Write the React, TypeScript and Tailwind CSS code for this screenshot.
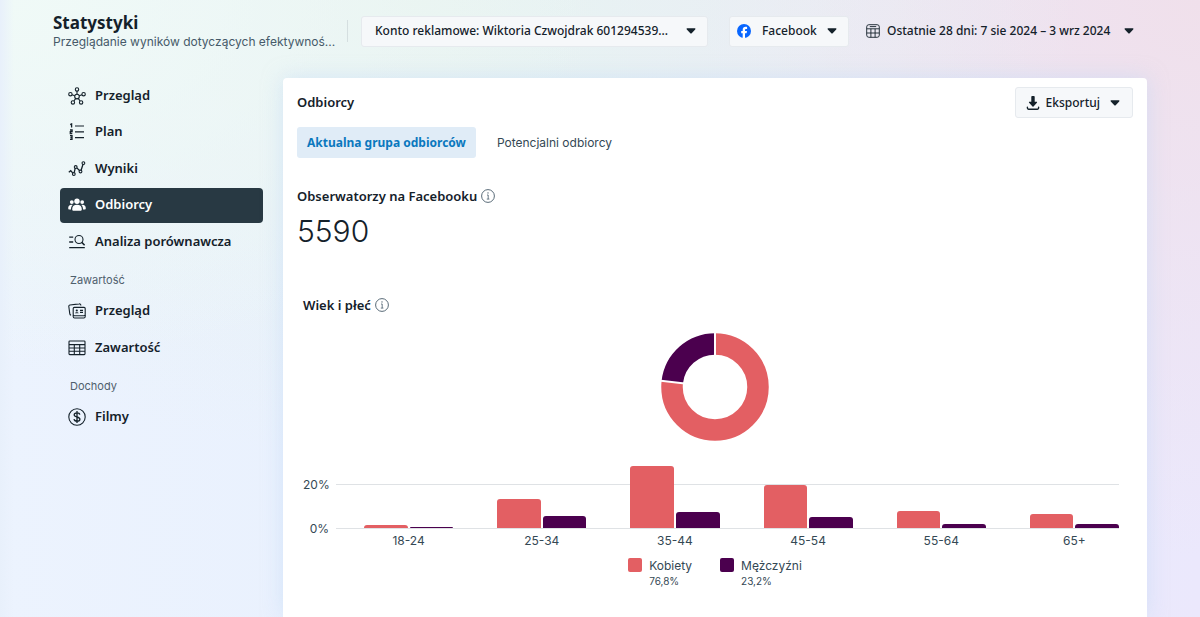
import React, { useState } from 'react';

type IconProps = { className?: string };

const iconProps = {
  viewBox: '0 0 18 18',
  fill: 'none',
  stroke: 'currentColor',
  strokeWidth: 1.1,
  'aria-hidden': true,
} as const;

const OverviewIcon: React.FC<IconProps> = ({ className }) => (
  <svg {...iconProps} className={className}>
    <circle cx="9" cy="9.6" r="2.3" />
    <circle cx="9" cy="2.4" r="1.7" />
    <circle cx="2.4" cy="7.2" r="1.7" />
    <circle cx="15.6" cy="7.2" r="1.7" />
    <circle cx="4.9" cy="15.4" r="1.7" />
    <circle cx="13.1" cy="15.4" r="1.7" />
    <path d="M9 4.1v3.2M4 7.8l2.8 1M14 7.8l-2.8 1M5.9 14l1.7-2.4M12.1 14l-1.7-2.4" />
  </svg>
);

const PlanIcon: React.FC<IconProps> = ({ className }) => (
  <svg {...iconProps} className={className}>
    <path d="M7 3h9M7 8.8h9M7 14.6h9" strokeWidth="1.2" />
    <path d="M2.2 1.6l1.4-.7v3.6M2 7h2.1v1.7H2.3v1.8h2M2 12.7h2v3.6H2M2.4 14.5H4" strokeWidth="1.3" />
  </svg>
);

const ResultsIcon: React.FC<IconProps> = ({ className }) => (
  <svg {...iconProps} className={className}>
    <path d="M.8 12.2l1.9-1.5 2 2.2M6.2 12.7l1-4.5M8.8 7.9l2.7 2.6M13.1 10.3l2-6.3" strokeWidth="1.3" />
    <circle cx="5.8" cy="14" r="1.4" />
    <circle cx="7.7" cy="7" r="1.4" />
    <circle cx="12.5" cy="11.5" r="1.4" />
    <circle cx="15.4" cy="3.1" r="1.4" />
  </svg>
);

const AudienceIcon: React.FC<IconProps> = ({ className }) => (
  <svg viewBox="0 0 18 18" fill="currentColor" className={className} aria-hidden>
    <circle cx="9" cy="5.2" r="2.7" />
    <circle cx="3.8" cy="6.1" r="1.9" />
    <circle cx="14.2" cy="6.1" r="1.9" />
    <path d="M4.2 13.2c0-2.9 1.9-4.4 4.8-4.4s4.8 1.5 4.8 4.4c0 1.2-.6 1.6-1.6 1.6H5.8c-1 0-1.6-.4-1.6-1.6z" />
    <path d="M.2 12.2c0-2 1.2-3.4 3.3-3.4.5 0 .9.1 1.2.2-1.2 1-1.8 2.5-1.7 4.5H1.4c-.8 0-1.2-.4-1.2-1.3zM17.8 12.2c0-2-1.2-3.4-3.3-3.4-.5 0-.9.1-1.2.2 1.2 1 1.8 2.5 1.7 4.5h1.6c.8 0 1.2-.4 1.2-1.3z" />
  </svg>
);

const BenchmarkIcon: React.FC<IconProps> = ({ className }) => (
  <svg {...iconProps} className={className}>
    <path d="M1.2 4.2h4M1.2 9h4M1.2 14.6h15.6" strokeWidth="1.3" />
    <circle cx="11" cy="6.5" r="4" />
    <path d="M13.8 9.4l2.8 2.8" strokeWidth="1.5" />
  </svg>
);

const CardsIcon: React.FC<IconProps> = ({ className }) => (
  <svg {...iconProps} className={className}>
    <rect x="5.2" y="5.4" width="12" height="8.4" rx="1.2" />
    <path d="M5.2 13v1.6c0 .9.5 1.4 1.4 1.4h9.2c.9 0 1.4-.5 1.4-1.4V13" />
    <path d="M12.8 3.6V3c-.1-.8-.7-1.3-1.6-1.1L2 3c-.9.1-1.3.7-1.2 1.5l1 7.4c.1.7.5 1.1 1.3 1.2" />
    <path d="M12 8.4h3M12 10.4h3" />
    <circle cx="8.8" cy="8.5" r="1.1" fill="currentColor" stroke="none" />
    <path d="M7 11.3c.2-1.4 3.4-1.4 3.6 0z" fill="currentColor" stroke="none" />
  </svg>
);

const TableIcon: React.FC<IconProps> = ({ className }) => (
  <svg {...iconProps} className={className}>
    <rect x="1" y="2" width="16" height="13.6" rx=".8" />
    <path d="M1 5.6h16M1 9h16M1 12.3h16M6.3 5.6v10M11.7 5.6v10" />
  </svg>
);

const DollarIcon: React.FC<IconProps> = ({ className }) => (
  <svg {...iconProps} className={className}>
    <circle cx="9" cy="9" r="8.2" />
    <path
      d="M9 3v12M11.8 6.6C11.6 5.4 10.6 4.8 9 4.8c-1.7 0-2.8.8-2.8 2 0 1.3 1.2 1.8 2.8 2.2s2.900.9 2.900 2.200c0 1.200-1.200 2-2.900 2s-2.800-.8-3-2"
      strokeWidth="1.3"
    />
  </svg>
);

const CalendarIcon: React.FC<IconProps> = ({ className }) => (
  <svg {...iconProps} viewBox="0 0 14 14" strokeWidth={0.9} className={className}>
    <rect x=".7" y=".7" width="12.6" height="12.6" rx="2.2" />
    <path d="M3.8 2.6h6.4M.7 4.8h12.6M.7 9h12.6M4.9 4.8v8.5M9.1 4.8v8.5" />
  </svg>
);

const FacebookIcon: React.FC<IconProps> = ({ className }) => (
  <svg viewBox="0 0 14 14" className={className} aria-hidden>
    <circle cx="7" cy="7" r="7" fill="#0866ff" />
    <path
      fill="#fff"
      d="M5.7 14V9.2H4.2V7.1h1.5v-1c0-2.2 1-3.3 3.1-3.3.4 0 .9.1 1.3.2v1.900h-.8c-1 0-1.300.4-1.300 1.300v.9H10l-.4 2.100H8V14z"
    />
  </svg>
);

const DownloadIcon: React.FC<IconProps> = ({ className }) => (
  <svg viewBox="0 0 14 14" fill="currentColor" className={className} aria-hidden>
    <path d="M5.300.8c0-.5.300-.8.800-.8h1.800c.5 0 .8.300.8.800v5h1.800c.6 0 .8.500.4.900L7.500 10.400c-.3.300-.7.300-1 0L3.100 6.700c-.4-.4-.2-.9.400-.9h1.800z" />
    <path d="M1.400 11.200v.9c0 .7.400 1.100 1.100 1.100h9c.7 0 1.100-.4 1.100-1.100v-.9" fill="none" stroke="currentColor" strokeWidth="1.4" strokeLinecap="round" />
  </svg>
);

const InfoIcon: React.FC<IconProps> = ({ className }) => (
  <svg viewBox="0 0 14 14" fill="none" stroke="currentColor" className={className} aria-hidden>
    <circle cx="7" cy="7" r="6.4" strokeWidth=".9" />
    <path d="M6 6h1.200v4M5.800 10.100h2.600" strokeWidth=".8" />
    <circle cx="7" cy="3.9" r=".7" fill="currentColor" stroke="none" />
  </svg>
);

const Caret: React.FC<IconProps> = ({ className = '' }) => (
  <svg viewBox="0 0 10 6" fill="currentColor" className={`w-2.5 h-1.5 ${className}`} aria-hidden>
    <path d="M1.300.3h7.400c.7 0 1 .7.500 1.200L5.700 5.300c-.4.400-1 .4-1.400 0L.8 1.500C.3 1 .6.300 1.300.3z" />
  </svg>
);

const NAV = [
  {
    title: '',
    listClass: 'h-[181px]',
    items: [
      { id: 'overview', label: 'Przegląd', Icon: OverviewIcon },
      { id: 'plan', label: 'Plan', Icon: PlanIcon },
      { id: 'results', label: 'Wyniki', Icon: ResultsIcon },
      { id: 'audience', label: 'Odbiorcy', Icon: AudienceIcon },
      { id: 'benchmark', label: 'Analiza porównawcza', Icon: BenchmarkIcon },
    ],
  },
  {
    title: 'Zawartość',
    listClass: 'h-[72px]',
    items: [
      { id: 'content-overview', label: 'Przegląd', Icon: CardsIcon },
      { id: 'content', label: 'Zawartość', Icon: TableIcon },
    ],
  },
  {
    title: 'Dochody',
    listClass: '',
    items: [{ id: 'videos', label: 'Filmy', Icon: DollarIcon }],
  },
];

const AGE_GROUPS = [
  { label: '18-24', women: 1.3, men: 0.6 },
  { label: '25-34', women: 13.2, men: 5.6 },
  { label: '35-44', women: 28.4, men: 7.6 },
  { label: '45-54', women: 20, men: 5 },
  { label: '55-64', women: 7.8, men: 2 },
  { label: '65+', women: 6.4, men: 2 },
];

const CHART_MAX = 30;
const WOMEN_SHARE = 76.8;

const Donut: React.FC = () => {
  const r = 43;
  const length = 2 * Math.PI * r;
  const women = (length * WOMEN_SHARE) / 100;
  // white spokes separate the two slices
  const angle = (WOMEN_SHARE / 100) * 2 * Math.PI;
  return (
    <svg viewBox="0 0 108 108" className="w-[108px] h-[108px]" role="img" aria-label="Kobiety 76,8%, mężczyźni 23,2%">
      <g transform="rotate(-90 54 54)" fill="none" strokeWidth="21.5">
        <circle cx="54" cy="54" r={r} stroke="#e35f63" strokeDasharray={`${women} ${length}`} />
        <circle cx="54" cy="54" r={r} stroke="#4b004e" strokeDasharray={`${length - women} ${length}`} strokeDashoffset={-women} />
      </g>
      <g stroke="#fff" strokeWidth="2">
        <line x1="54" y1="54" x2="54" y2="0" />
        <line x1="54" y1="54" x2={54 + 55 * Math.sin(angle)} y2={54 - 55 * Math.cos(angle)} />
      </g>
    </svg>
  );
};

const BarChart: React.FC = () => (
  <div className="flex gap-[7px]">
    <div className="flex flex-col justify-between h-[60px] mt-[15px] w-[26px] text-right text-xs leading-4 text-[#344854]">
      <span>20%</span>
      <span>0%</span>
    </div>
    <div className="flex-1">
      <div className="relative h-[66px] mt-px">
        <div className="absolute inset-x-0 bottom-[44px] border-t border-[#dfe2e5]" />
        <div className="relative flex h-full gap-11 pl-7 border-b border-[#dfe2e5]">
          {AGE_GROUPS.map((group) => (
            <div key={group.label} className="flex flex-1 items-end gap-0.5">
              <div className="flex-1 rounded-t-[3px] bg-[#e35f63]" style={{ height: `${(group.women / CHART_MAX) * 100}%` }} />
              <div className="flex-1 rounded-t-[3px] bg-[#4b004e]" style={{ height: `${(group.men / CHART_MAX) * 100}%` }} />
            </div>
          ))}
        </div>
      </div>
      <div className="flex gap-11 pl-7 mt-1 text-xs leading-4 text-[#344854]">
        {AGE_GROUPS.map((group) => (
          <span key={group.label} className="flex-1 text-center">{group.label}</span>
        ))}
      </div>
    </div>
  </div>
);

const App: React.FC = () => {
  const [active, setActive] = useState('audience');
  const [tab, setTab] = useState('current');

  return (
    <div className="relative isolate min-h-screen flex flex-col bg-[#eaf2fd] font-['Noto_Sans',sans-serif] text-[13px] text-[#14212a]">
      <div className="absolute inset-0 -z-10 bg-[linear-gradient(90deg,#e8f0fb_0px,transparent_14px),radial-gradient(ellipse_50%_60%_at_0%_0%,#f0faf7_0%,transparent_100%),radial-gradient(ellipse_55%_75%_at_35%_0%,#e8f3f0_0%,transparent_100%),radial-gradient(ellipse_55%_90%_at_100%_0%,#f0e0eb_0%,transparent_100%),linear-gradient(90deg,#ecf3fe_0%,#e7effd_50%,#ebe8fc_100%)]" />

      <header className="flex items-center h-[78px] pb-4 pl-[53px] pr-[53px]">
        <div className="w-[276px] shrink-0 pt-0.5">
          <h1 className="text-[17px] leading-5 font-bold">Statystyki</h1>
          <p className="font-[Inter,sans-serif] text-xs leading-[18px] text-[#465a69] whitespace-nowrap">
            Przeglądanie wyników dotyczących efektywnoś...
          </p>
        </div>
        <div className="w-px h-[22px] ml-[18px] mr-[13px] bg-[#d5dfe0]" />
        <div className="relative flex-1 max-w-[347px]">
          <select aria-label="Konto reklamowe" className="appearance-none w-full h-[31px] pl-[13px] pr-7 rounded-[3px] bg-[#f6f8fa] border border-[#e6eaee] text-xs font-medium">
            <option>Konto reklamowe: Wiktoria Czwojdrak 601294539...</option>
          </select>
          <Caret className="absolute right-3 top-3 pointer-events-none" />
        </div>
        <div className="relative ml-[21px]">
          <FacebookIcon className="absolute left-2 top-2 w-3.5 h-3.5 pointer-events-none" />
          <select aria-label="Platforma" className="appearance-none w-[120px] h-[31px] pl-8 pr-6 rounded-[3px] bg-[#f6f8fa] border border-[#e6eaee] text-xs font-medium">
            <option>Facebook</option>
            <option>Instagram</option>
          </select>
          <Caret className="absolute right-3 top-3 pointer-events-none" />
        </div>
        <div className="relative ml-[17px]">
          <CalendarIcon className="absolute left-0 top-2 w-3.5 h-3.5 pointer-events-none" />
          <select aria-label="Zakres dat" className="appearance-none w-[268px] h-[31px] pl-[21px] pr-3 bg-transparent text-xs font-medium">
            <option>Ostatnie 28 dni: 7 sie 2024 – 3 wrz 2024</option>
          </select>
          <Caret className="absolute right-0 top-3 pointer-events-none" />
        </div>
      </header>

      <div className="flex flex-1 pl-[60px] pr-[53px]">
        <nav className="w-[203px] shrink-0 mr-5">
          {NAV.map(({ title, listClass, items }) => (
            <div key={title}>
              {title && <h2 className="mt-[13px] mb-[5px] pl-2.5 font-[Inter,sans-serif] text-[11px] leading-4 text-[#4f606d]">{title}</h2>}
              <ul className={`flex flex-col justify-between ${listClass}`}>
                {items.map(({ id, label, Icon }) => (
                  <li key={id}>
                    <a
                      href={`#${id}`}
                      onClick={() => setActive(id)}
                      className={`flex items-center gap-[9px] h-[35px] px-2 rounded font-semibold ${
                        active === id ? 'bg-[#283943] text-white' : 'hover:bg-white/50'
                      }`}
                    >
                      <Icon className="w-[18px] h-[18px]" />
                      {label}
                    </a>
                  </li>
                ))}
              </ul>
            </div>
          ))}
        </nav>

        <main className="flex-1 px-3.5 pt-[9px] rounded-t bg-white shadow-[0_0_20px_rgba(190,215,245,0.5)]">
          <div className="flex items-center justify-between">
            <h2 className="font-semibold">Odbiorcy</h2>
            <button type="button" aria-haspopup="menu" className="flex items-center h-[31px] pl-2.5 pr-3 rounded-[3px] bg-[#f6f8fa] border border-[#e6eaee] text-xs font-medium">
              <DownloadIcon className="w-3.5 h-3.5 mr-1.5" />
              Eksportuj
              <Caret className="ml-2.5" />
            </button>
          </div>

          <div role="tablist" className="flex gap-[11px] mt-[9px]">
            {[
              { id: 'current', label: 'Aktualna grupa odbiorców' },
              { id: 'potential', label: 'Potencjalni odbiorcy' },
            ].map(({ id, label }) => (
              <button
                key={id}
                type="button"
                role="tab"
                aria-selected={tab === id}
                onClick={() => setTab(id)}
                className={`h-[31px] px-2.5 rounded-[3px] text-xs ${
                  tab === id ? 'bg-[#e0ecf7] text-[#0a78be] font-bold' : 'font-[Inter,sans-serif] text-[#344854]'
                }`}
              >
                {label}
              </button>
            ))}
          </div>

          <section className="mt-7">
            <h3 className="flex items-center gap-1 leading-5 font-semibold">
              Obserwatorzy na Facebooku
              <InfoIcon className="w-3.5 h-3.5 text-[#465a69]" />
            </h3>
            <p className="mt-2 font-[Inter,sans-serif] text-[30px] leading-[34px] font-light">5590</p>
          </section>

          <section className="mt-[47px] pl-1.5 pr-3.5">
            <h3 className="flex items-center gap-1 leading-5 font-semibold">
              Wiek i płeć
              <InfoIcon className="w-3.5 h-3.5 text-[#465a69]" />
            </h3>
            <div className="font-[Inter,sans-serif]">
              <div className="flex justify-center mt-[18px] mb-[21px] pl-2">
                <Donut />
              </div>
              <BarChart />
              <div className="flex justify-center gap-7 mt-[9px] pl-2 text-xs leading-4 text-[#344854]">
                <div className="flex gap-[7px]">
                  <span className="w-3.5 h-3.5 rounded-xs bg-[#e35f63]" />
                  <div>
                    Kobiety
                    <p className="text-[10px] leading-[14px]">76,8%</p>
                  </div>
                </div>
                <div className="flex gap-[7px]">
                  <span className="w-3.5 h-3.5 rounded-xs bg-[#4b004e]" />
                  <div>
                    Mężczyźni
                    <p className="text-[10px] leading-[14px]">23,2%</p>
                  </div>
                </div>
              </div>
            </div>
          </section>
        </main>
      </div>
    </div>
  );
};

export default App;
